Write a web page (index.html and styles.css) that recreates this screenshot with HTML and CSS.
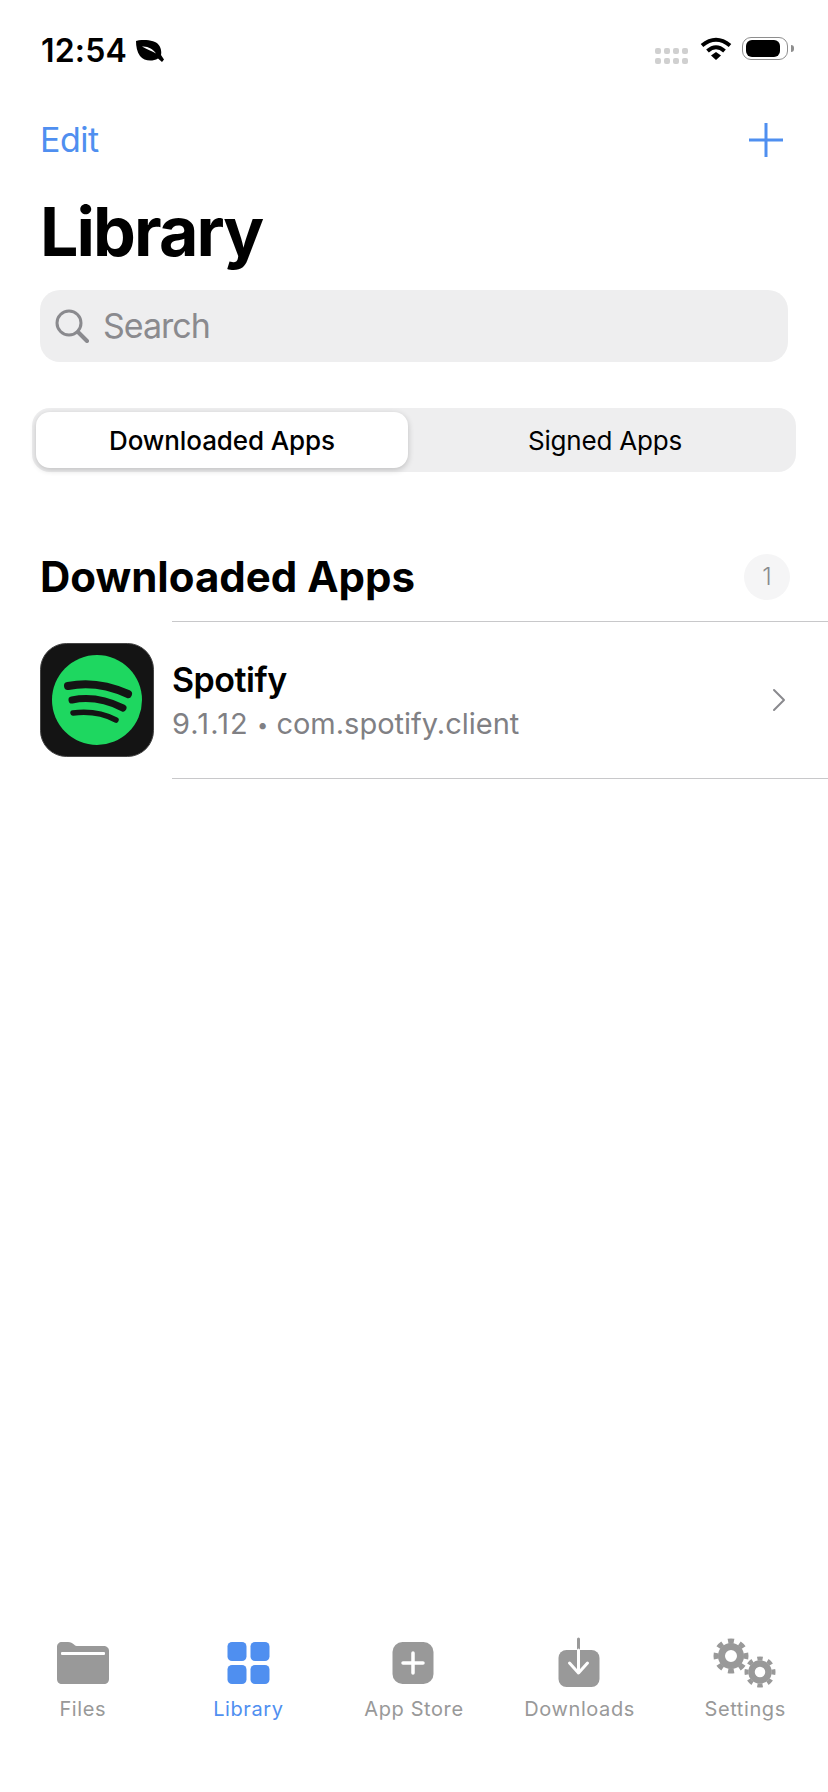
FILE: index.html
```html
<!DOCTYPE html>
<html lang="en">
  <head>
    <meta charset="UTF-8" />
    <meta name="viewport" content="width=device-width, initial-scale=1.0" />
    <title>Library</title>
    <link rel="stylesheet" href="styles.css">
  </head>
  <body>
    <div class="page">
      <header class="status-bar">
        <div class="status-left">
          <span class="status-time">12:54</span>
          <svg class="leaf" viewBox="0 0 28 22">
            <path d="M0 1C7 -1 14 0 19 2C24 4 26 10 25 15L28 19.500L26 22L22 18.500C16 22 8 21 4 16C1 12 0 6 0 1Z" fill="#000" />
            <path d="M6 6.500C12 6 17 9 20 13.500C16 11 11 9.500 6 6.500Z" fill="#fff" />
          </svg>
        </div>
        <div class="status-right">
          <div class="cell-dots">
            <i></i><i></i><i></i><i></i><i></i><i></i><i></i><i></i>
          </div>
          <svg class="wifi" viewBox="0 0 32 23">
            <path d="M2 8.500Q16 -3 30 8.500" fill="none" stroke="#000" stroke-width="4" />
            <path d="M7.500 14Q16 6.500 24.500 14" fill="none" stroke="#000" stroke-width="4" />
            <path d="M11 18.500L16 15L21 18.500L16 23Z" fill="#000" />
          </svg>
          <div class="battery"><span class="battery-level"></span></div>
          <span class="battery-nub"></span>
        </div>
      </header>

      <nav class="nav-row">
        <a class="nav-edit" href="#">Edit</a>
        <svg class="nav-plus" viewBox="0 0 34 34">
          <path d="M17 0V34M0 17H34" stroke="#4f8ff0" stroke-width="3" stroke-linecap="round" />
        </svg>
      </nav>

      <h1 class="page-title">Library</h1>

      <div class="search">
        <svg class="search-icon" viewBox="0 0 34 34">
          <circle cx="14" cy="14" r="12" fill="none" stroke="#8a8a8e" stroke-width="3" />
          <path d="M23 23L32 32" stroke="#8a8a8e" stroke-width="4" stroke-linecap="round" />
        </svg>
        <span class="search-text">Search</span>
      </div>

      <div class="segment">
        <div class="segment-item active">Downloaded Apps</div>
        <div class="segment-item">Signed Apps</div>
      </div>

      <section class="apps">
        <div class="apps-head">
          <h2 class="apps-title">Downloaded Apps</h2>
          <span class="apps-count">1</span>
        </div>
        <div class="app-row">
          <svg class="app-icon" viewBox="0 0 114 114">
            <rect x="0.5" y="0.5" width="113" height="113" rx="26" fill="#141414" stroke="#444" />
            <circle cx="57" cy="57" r="45" fill="#1ed760" />
            <path d="M28 43Q57 37 88 51" fill="none" stroke="#141414" stroke-width="8" stroke-linecap="round" />
            <path d="M32 57Q57 52 83 65" fill="none" stroke="#141414" stroke-width="7" stroke-linecap="round" />
            <path d="M33 70Q57 67 76 77" fill="none" stroke="#141414" stroke-width="5.500" stroke-linecap="round" />
          </svg>
          <div class="app-info">
            <div class="app-text">
              <div class="app-name">Spotify</div>
              <div class="app-meta"><span class="meta-version">9.1.12</span> <span class="meta-dot">•</span> com.spotify.client</div>
            </div>
            <svg class="chevron" viewBox="0 0 14 24">
              <path d="M2 2L12 12L2 22" fill="none" stroke="#8a8a8e" stroke-width="2" stroke-linecap="round" stroke-linejoin="round" />
            </svg>
          </div>
        </div>
      </section>

      <footer class="tab-bar">
        <div class="tab">
          <svg class="tab-icon" viewBox="0 0 80 54">
            <path d="M14 10C14 7 16 5 19 5H25C28 5 29 6 31 7.500C32 8.500 33 9 35 9H60C64 9 66 11 66 14V42C66 45 64 47 61 47H19C16 47 14 45 14 42Z" fill="#999" />
            <rect x="18" y="15" width="44" height="3" rx="1" fill="#fff" />
          </svg>
          <span class="tab-label">Files</span>
        </div>
        <div class="tab active">
          <svg class="tab-icon" viewBox="0 0 80 54">
            <rect x="19.500" y="5" width="19" height="19" rx="4.500" fill="#4f8ff0" />
            <rect x="42.500" y="5" width="19" height="19" rx="4.500" fill="#4f8ff0" />
            <rect x="19.500" y="28" width="19" height="19" rx="4.500" fill="#4f8ff0" />
            <rect x="42.500" y="28" width="19" height="19" rx="4.500" fill="#4f8ff0" />
          </svg>
          <span class="tab-label">Library</span>
        </div>
        <div class="tab">
          <svg class="tab-icon" viewBox="0 0 80 54">
            <rect x="18.500" y="5" width="41" height="42" rx="10" fill="#999" />
            <path d="M39 16V36M29 26H49" stroke="#fff" stroke-width="3.500" stroke-linecap="round" />
          </svg>
          <span class="tab-label">App Store</span>
        </div>
        <div class="tab">
          <svg class="tab-icon" viewBox="0 0 80 54">
            <rect x="18.500" y="13" width="41" height="37" rx="8" fill="#999" />
            <path d="M38.500 2V13" stroke="#999" stroke-width="3" stroke-linecap="round" />
            <path d="M38.500 13V35M29.500 26L38.500 36L47.500 26" fill="none" stroke="#fff" stroke-width="3" stroke-linecap="round" stroke-linejoin="round" />
          </svg>
          <span class="tab-label">Downloads</span>
        </div>
        <div class="tab">
          <svg class="tab-icon" viewBox="0 0 80 54">
            <circle cx="26" cy="19" r="15" fill="none" stroke="#999" stroke-width="5" pathLength="16" stroke-dasharray="1 1" transform="rotate(-11.25 26 19)" />
            <circle cx="26" cy="19" r="9.500" fill="none" stroke="#999" stroke-width="7" />
            <circle cx="55" cy="35" r="13.500" fill="none" stroke="#999" stroke-width="4" pathLength="16" stroke-dasharray="1 1" transform="rotate(-11.25 55 35)" />
            <circle cx="55" cy="35" r="8.500" fill="none" stroke="#999" stroke-width="6.500" />
          </svg>
          <span class="tab-label">Settings</span>
        </div>
      </footer>
    </div>
  </body>
</html>
```

FILE: styles.css
```css
* {
  margin: 0;
  padding: 0;
  box-sizing: border-box;
}
body {
  background: #fff;
  font-family: Inter, "Liberation Sans", sans-serif;
  color: #000;
  overflow: hidden;
}
.page {
  display: flex;
  flex-direction: column;
  height: 1792px;
  padding: 0 40px;
}

.status-bar {
  display: flex;
  justify-content: space-between;
  align-items: center;
  flex: none;
  height: 100px;
}
.status-left {
  display: flex;
  align-items: center;
  gap: 9px;
  padding-left: 1px;
  padding-top: 2px;
}
.status-time {
  font-size: 32px;
  font-weight: 600;
  line-height: 40px;
  letter-spacing: 0.2px;
}
.leaf {
  width: 28px;
  height: 22px;
}
.status-right {
  display: flex;
  align-items: center;
  margin-right: -6px;
  padding-bottom: 3px;
}
.cell-dots {
  display: grid;
  grid-template-columns: repeat(4, 6px);
  gap: 4px 3px;
  margin-top: 14px;
  margin-right: 12px;
}
.cell-dots i {
  height: 6px;
  background: #d0d0d0;
  border-radius: 2px;
}
.wifi {
  width: 32px;
  height: 23px;
  margin-right: 10px;
}
.battery {
  width: 46px;
  height: 23px;
  padding: 2px 7px 2px 3px;
  border: 1.5px solid #8e8e8e;
  border-radius: 9px;
}
.battery-level {
  display: block;
  height: 100%;
  background: #000;
  border-radius: 6px;
}
.battery-nub {
  width: 3px;
  height: 7px;
  margin-left: 3px;
  background: #8e8e8e;
  border-radius: 0 3px 3px 0;
}

.nav-row {
  display: flex;
  justify-content: space-between;
  align-items: center;
  flex: none;
  height: 78px;
  margin-top: 1px;
}
.nav-edit {
  color: #4f8ff0;
  font-size: 34px;
  line-height: 40px;
  letter-spacing: -0.5px;
  text-decoration: none;
}
.nav-plus {
  width: 34px;
  height: 34px;
  margin-right: 5px;
}

.page-title {
  font-size: 68px;
  font-weight: 700;
  line-height: 80px;
  letter-spacing: -1.9px;
  margin-top: 12px;
  margin-bottom: 19px;
}

.search {
  display: flex;
  align-items: center;
  gap: 14px;
  flex: none;
  height: 72px;
  padding-left: 15px;
  background: #eeeeef;
  border-radius: 20px;
}
.search-icon {
  width: 34px;
  height: 34px;
}
.search-text {
  color: #8a8a8e;
  font-size: 34px;
  letter-spacing: -1px;
  padding-bottom: 2px;
}

.segment {
  display: grid;
  grid-template-columns: 372px 1fr;
  flex: none;
  height: 64px;
  margin: 46px -8px 0;
  padding: 4px;
  background: #eeeeef;
  border-radius: 18px;
}
.segment-item {
  display: flex;
  justify-content: center;
  align-items: center;
  padding-left: 10px;
  font-size: 26px;
  font-weight: 400;
  letter-spacing: -0.2px;
  border-radius: 14px;
}
.segment-item.active {
  padding-left: 0;
  font-weight: 500;
  letter-spacing: -0.1px;
  background: #fff;
  box-shadow: 0 2px 6px rgba(0, 0, 0, 0.2);
}

.apps {
  margin-right: -40px;
  margin-top: 72px;
}
.apps-head {
  display: flex;
  justify-content: space-between;
  align-items: center;
  height: 77px;
  padding-right: 38px;
  padding-bottom: 12px;
}
.apps-title {
  font-size: 42px;
  font-weight: 700;
  line-height: 50px;
}
.apps-count {
  display: flex;
  justify-content: center;
  align-items: center;
  width: 46px;
  height: 46px;
  color: #8a8a8e;
  font-size: 24px;
  font-weight: 300;
  background: #f5f5f6;
  border-radius: 50%;
}
.app-row {
  display: flex;
  align-items: center;
  gap: 18px;
}
.app-icon {
  flex: none;
  width: 114px;
  height: 114px;
}
.app-info {
  display: flex;
  justify-content: space-between;
  align-items: center;
  flex: 1;
  height: 158px;
  padding-right: 42px;
  border-top: 1.5px solid #c8c8ca;
  border-bottom: 1.5px solid #c8c8ca;
}
.app-text {
  padding-top: 4px;
}
.app-name {
  font-size: 34px;
  font-weight: 600;
  line-height: 42px;
  letter-spacing: -0.5px;
}
.app-meta {
  margin-top: 2px;
  color: #808084;
  font-size: 29px;
  line-height: 42px;
}
.meta-version {
  letter-spacing: 1.1px;
}
.meta-dot {
  font-size: 20px;
  vertical-align: 2px;
}
.chevron {
  width: 14px;
  height: 24px;
}

.tab-bar {
  display: grid;
  grid-template-columns: repeat(5, 1fr);
  flex: none;
  margin: auto -40px 0;
  padding: 0 0 71px;
}
.tab {
  display: flex;
  flex-direction: column;
  align-items: center;
  gap: 6px;
  color: #999;
}
.tab.active {
  color: #4f8ff0;
}
.tab-icon {
  width: 80px;
  height: 54px;
}
.tab-label {
  font-size: 20px;
  font-weight: 400;
  line-height: 24px;
  letter-spacing: 0.6px;
}
```
